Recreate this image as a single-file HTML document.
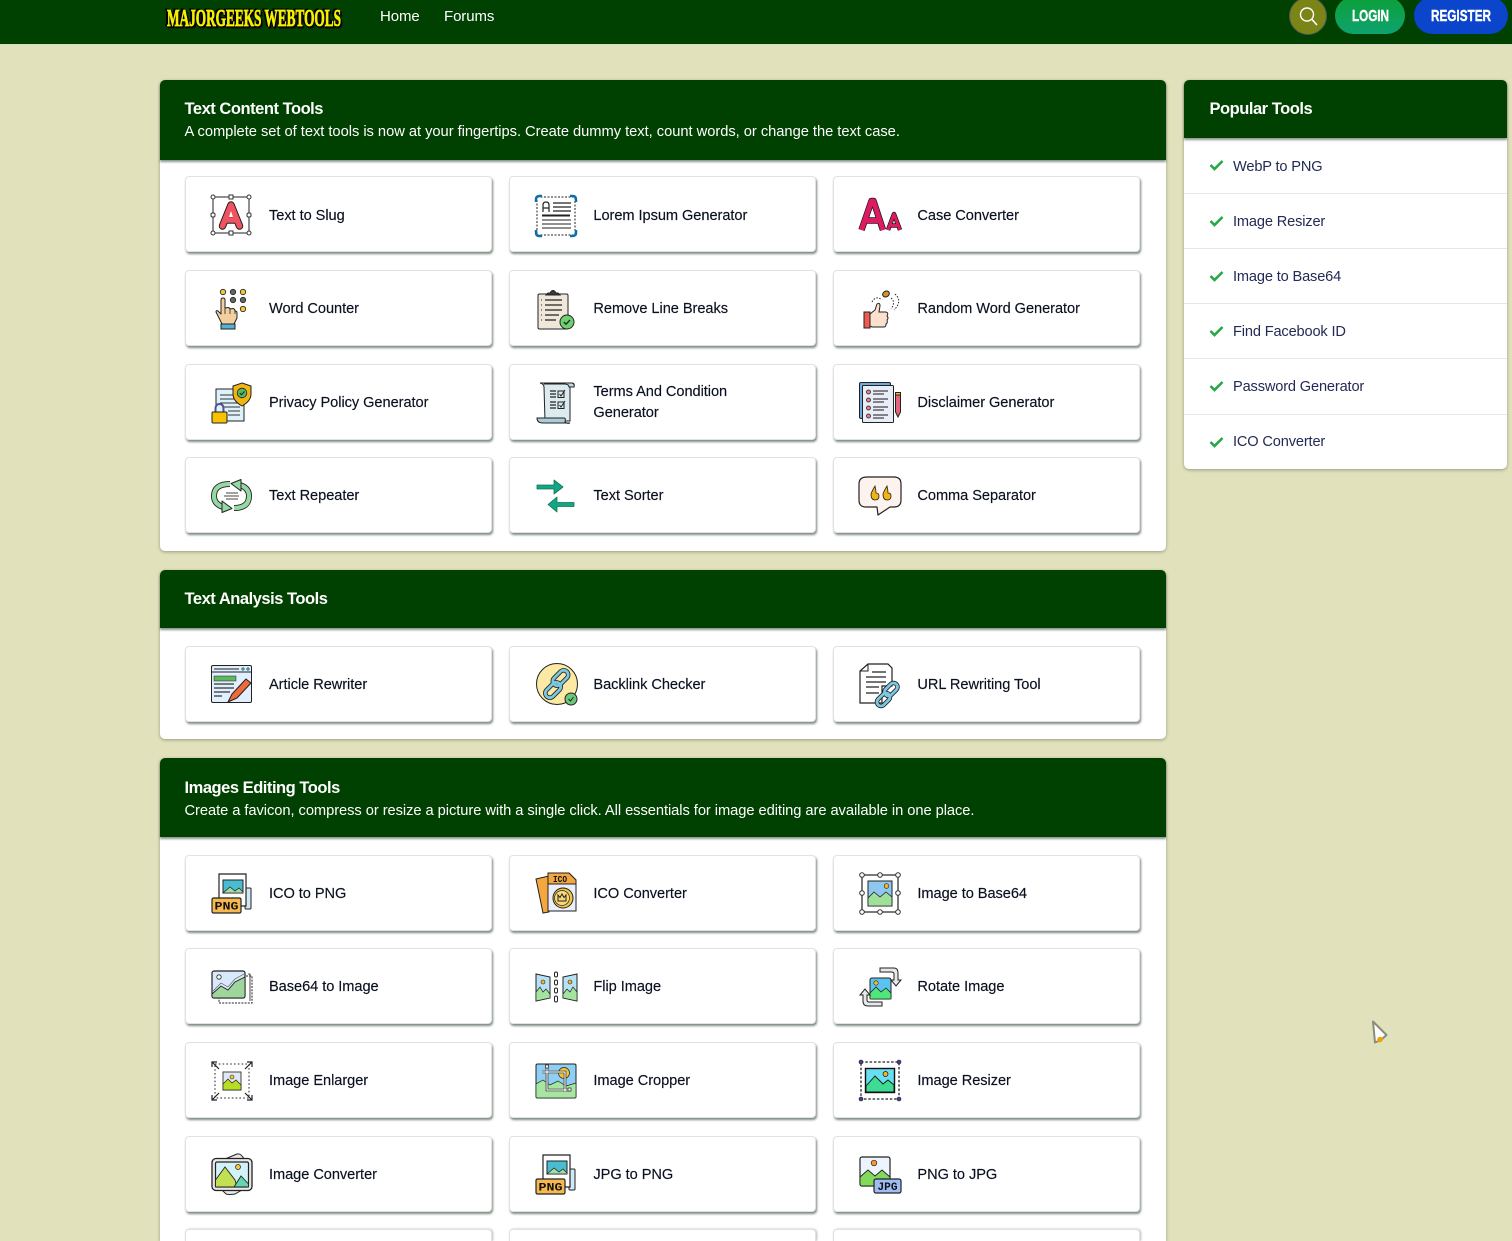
<!DOCTYPE html>
<html lang="en"><head><meta charset="utf-8"><title>MajorGeeks WebTools</title>
<style>
*{box-sizing:border-box}
html,body{margin:0;padding:0;width:1512px;height:1241px;overflow:hidden}
body{background:#e1e1bc;font-family:"Liberation Sans",sans-serif;color:#0b1020}
#w{position:relative;width:1512px;height:1241px;overflow:hidden;background:#e1e1bc}
a{color:inherit;text-decoration:none}
.nav{position:absolute;left:0;top:0;width:1512px;height:45px;background:#004000;border-bottom:1px solid #d5ddc8}
.nav a.l{position:absolute;top:8px;font-size:15px;line-height:18px;color:#fff;letter-spacing:-.1px}
.sec{position:absolute;left:160px;width:1006px;background:#fff;border-radius:5px;box-shadow:0 1px 3px rgba(60,70,50,.45)}
.hd{position:relative;background:#004000;border-radius:5px 5px 0 0;color:#fff;box-shadow:0 2px 2px rgba(70,90,80,.65)}
.hd h2{margin:0;font-size:16.5px;font-weight:bold;letter-spacing:-.47px;position:absolute;left:24.5px;line-height:22px}
.hd p{margin:0;font-size:14.7px;position:absolute;left:24.5px;line-height:20px;white-space:nowrap}
.c{position:absolute;width:307px;height:76px;background:#fff;border:1px solid #e2e2e2;border-radius:4px;box-shadow:1px 2px 2px rgba(70,90,75,.7)}
.c svg{position:absolute;left:24px;top:16px;width:44px;height:44px;overflow:visible}
.c span{position:absolute;left:83px;top:0;height:76px;display:flex;align-items:center;font-size:14.6px;line-height:21px;white-space:nowrap;letter-spacing:-.05px;-webkit-text-stroke:.15px #0b1020}
.c.r1 span{top:1px}
.c.e{height:12px;border-bottom:0;border-radius:4px 4px 0 0;box-shadow:1px 0 2px rgba(70,90,75,.4)}
.side{position:absolute;left:1184px;top:80px;width:323px;height:389px;background:#fff;border-radius:5px;box-shadow:0 1px 3px rgba(60,70,50,.45)}
.side .hd{height:58px}
.it{position:absolute;left:0;width:323px;height:55px;border-top:1px solid #e3e6ea;color:#222a55;font-size:14.6px;line-height:20px;letter-spacing:-.15px}
.it b{position:absolute;left:49px;top:18px;font-weight:normal;white-space:nowrap}
.it svg{position:absolute;left:25px;top:21px}
</style></head><body><div id="w">
<div class="nav">
<svg style="position:absolute;left:160px;top:2px;filter:drop-shadow(1px 1px 0 #000) drop-shadow(-1px -1px 0 #000) drop-shadow(1px 1px 0 #111) drop-shadow(-.5px .5px 0 #000)" width="190" height="34"><text x="7" y="24" textLength="174" lengthAdjust="spacingAndGlyphs" font-family="Liberation Serif" font-weight="bold" font-size="24" fill="#f4f000" stroke="#f4f000" stroke-width=".8">MAJORGEEKS WEBTOOLS</text></svg>
<a class="l" href="#" style="left:380px">Home</a><a class="l" href="#" style="left:444px">Forums</a>
<svg style="position:absolute;left:1289px;top:-3px" width="38" height="38"><circle cx="19" cy="19" r="18.5" fill="#7b8416" stroke="#4c5a50"/><circle cx="18" cy="17.500" r="6.500" fill="none" stroke="#fff" stroke-width="1.400"/><path d="M23 22.500L28 28" stroke="#fff" stroke-width="1.600"/></svg>
<svg style="position:absolute;left:1335px;top:-3px" width="70" height="37"><defs><linearGradient id="g1" x1="0" y1="0" x2="0" y2="1"><stop offset="0" stop-color="#0d9f38"/><stop offset="1" stop-color="#0ea36f"/></linearGradient></defs><rect width="70" height="37" rx="18.500" fill="url(#g1)"/><text x="17" y="24" textLength="37" lengthAdjust="spacingAndGlyphs" font-family="Liberation Sans" font-weight="bold" font-size="15.500" fill="#fff" stroke="#fff" stroke-width=".4">LOGIN</text></svg>
<svg style="position:absolute;left:1414px;top:-3px" width="94" height="37"><rect width="94" height="37" rx="18.500" fill="#0b45cc"/><text x="17" y="24" textLength="60" lengthAdjust="spacingAndGlyphs" font-family="Liberation Sans" font-weight="bold" font-size="15.500" fill="#fff" stroke="#fff" stroke-width=".4">REGISTER</text></svg>
</div>

<div class="sec" style="top:80px;height:471px"><div class="hd" style="height:80px"><h2 style="top:18px">Text Content Tools</h2><p style="top:42px;letter-spacing:-.027px">A complete set of text tools is now at your fingertips. Create dummy text, count words, or change the text case.</p></div></div>
<div class="sec" style="top:570px;height:169px"><div class="hd" style="height:58px"><h2 style="top:18px">Text Analysis Tools</h2></div></div>
<div class="sec" style="top:758px;height:483px;border-radius:5px 5px 0 0"><div class="hd" style="height:79px"><h2 style="top:19px">Images Editing Tools</h2><p style="top:43px;letter-spacing:-.06px">Create a favicon, compress or resize a picture with a single click. All essentials for image editing are available in one place.</p></div></div>

<div class="c r1" style="left:185px;top:176px"><svg viewBox="0 0 44 44"><rect x="3" y="4" width="36" height="36" fill="none" stroke="#222"/><path d="M12.500 33L21 12L29.500 33M15 27H27" fill="none" stroke="#222" stroke-width="7.500" stroke-linecap="round" stroke-linejoin="round"/><path d="M12.500 33L21 12L29.500 33M15 27H27" fill="none" stroke="#f0525f" stroke-width="5.500" stroke-linecap="round" stroke-linejoin="round"/><path d="M19 24L21 18L23 24Z" fill="#fff"/><g fill="#fff" stroke="#333"><circle cx="3" cy="4" r="2"/><rect x="19" y="2" width="4" height="4"/><circle cx="39" cy="4" r="2"/><rect x="1" y="20" width="4" height="4" rx="1.500"/><rect x="37" y="20" width="4" height="4" rx="1.500"/><circle cx="3" cy="40" r="2"/><rect x="19" y="38" width="4" height="4"/><circle cx="39" cy="40" r="2"/></g></svg><span>Text to Slug</span></div>

<div class="c r1" style="left:509.4px;top:176px"><svg viewBox="0 0 44 44"><rect x="3" y="4" width="38" height="38" fill="#fff" stroke="#222" stroke-dasharray="2 1.500"/><path d="M2 9V6Q2 3 6 3H8M36 3H39Q42 3 42 7V9M42 37V40Q42 43 38 43H36M8 43H5Q2 43 2 39V37" fill="none" stroke="#0d6fa8" stroke-width="2.500"/><path d="M9 19V12Q9 9 12 9T15 12V19M9 15H15M19 10H37M19 14H37M19 18H37" fill="none" stroke="#222" stroke-width="1.200"/><path d="M8 22.500H36" stroke="#222" stroke-width="2"/><path d="M8 27H37M8 31H37M8 35H37" stroke="#222" stroke-width="1.100"/></svg><span>Lorem Ipsum Generator</span></div>

<div class="c r1" style="left:833.4px;top:176px"><svg viewBox="0 0 44 44"><path d="M3.500 37L13.500 8H15.500L25 37M8 27.500H21" fill="none" stroke="#1a1a1a" stroke-width="6.500" stroke-linejoin="round"/><path d="M3.500 37L13.500 8H15.500L25 37M8 27.500H21" fill="none" stroke="#e01a62" stroke-width="5" stroke-linejoin="round"/><path d="M30 37L36 21L42 37M33 32.500H39" fill="none" stroke="#1a1a1a" stroke-width="4.500" stroke-linejoin="round"/><path d="M30 37L36 21L42 37M33 32.500H39" fill="none" stroke="#e01a62" stroke-width="3" stroke-linejoin="round"/></svg><span>Case Converter</span></div>

<div class="c" style="left:185px;top:270px"><svg viewBox="0 0 44 44"><g stroke="#222" stroke-width=".8"><circle cx="13" cy="5" r="2.700" fill="#f5c935"/><circle cx="23" cy="5" r="2.700" fill="#666"/><circle cx="33" cy="5" r="2.700" fill="#f5c935"/><circle cx="23" cy="13" r="2.700" fill="#666"/><circle cx="33" cy="13" r="2.700" fill="#666"/><circle cx="33" cy="22" r="2.700" fill="#f5c935"/></g><path d="M12 37L9 31L6 25Q6 23 8 24L11 27V13Q11 11 13 11T15 13V21L18 20.500Q20 21 20 22L23 21.500Q25 22 25 24Q27 24 27 26V31L24 37Z" fill="#f3cfa0" stroke="#222" stroke-linejoin="round"/><path d="M15 21V27M20 22V27M25 24V27" stroke="#222" stroke-width=".8"/><rect x="11" y="37" width="14" height="5" fill="#53b3d6" stroke="#222"/></svg><span>Word Counter</span></div>

<div class="c" style="left:509.4px;top:270px"><svg viewBox="0 0 44 44"><rect x="4" y="7" width="30" height="35" rx="1.500" fill="#f0e6da" stroke="#222"/><path d="M12 8L14 6H16Q19 1 22 6H24L26 8Z" fill="#3a3a3a" stroke="#222"/><path d="M11 13H28M11 18H28M11 23H28M11 28H25M11 33H22" stroke="#222" stroke-width="1.200"/><path d="M7 13H8M7 18H8M7 23H8M7 28H8M7 33H8" stroke="#222"/><circle cx="33" cy="35" r="7" fill="#6fd06f" stroke="#222"/><path d="M29.800 35L32 37.200L36 33" fill="none" stroke="#222" stroke-width="1.300"/></svg><span>Remove Line Breaks</span></div>

<div class="c" style="left:833.4px;top:270px"><svg viewBox="0 0 44 44"><rect x="6" y="25" width="6" height="16" fill="#ee5a52" stroke="#222"/><path d="M12 27L17 23L19 17Q22 15 22 19L21 25H28Q31 26 29 29Q31 31 29 33Q30 36 28 37Q28 40 26 40H14L12 39Z" fill="#fbe1cd" stroke="#222"/><ellipse cx="28" cy="7" rx="3.500" ry="2.800" fill="#d8912c" stroke="#222" transform="rotate(-30 28 7)"/><path d="M14 15Q18 8 24 13M37 7Q45 14 36 23M33 11Q38 15 33 22" fill="none" stroke="#222" stroke-dasharray="1.500 1.500"/></svg><span>Random Word Generator</span></div>

<div class="c" style="left:185px;top:364px"><svg viewBox="0 0 44 44"><path d="M6 8H30L34 12V40H6Z" fill="#dff1fa" stroke="#222"/><path d="M10 14H24M10 18H24M10 22H30M14 26H30M18 30H30M18 34H30" stroke="#333" stroke-width="1.100"/><path d="M32 2L41 5V13Q41 20 32 25Q23 20 23 13V5Z" fill="#f0b512" stroke="#222"/><circle cx="32" cy="12" r="4.800" fill="#58b958" stroke="#222" stroke-width=".8"/><path d="M29.800 12L31.500 13.800L34.500 10.500" fill="none" stroke="#123" stroke-width="1"/><path d="M5.500 32V28Q5.500 23 9.500 23T13.500 28V32" fill="none" stroke="#55508f" stroke-width="2"/><rect x="2" y="31" width="15" height="11" rx="1" fill="#f7c300" stroke="#222"/></svg><span>Privacy Policy Generator</span></div>

<div class="c" style="left:509.4px;top:364px"><svg viewBox="0 0 44 44"><path d="M6 2H38Q41 2 40 6H36V40H11L10 6Q10 3 6 2Z" fill="#dcebf0" stroke="#222"/><path d="M6 2H38Q41 3 40 6H35Q35 3 30 3H10" fill="#bcd9e4" stroke="#222"/><path d="M3 37H30Q32 37 31 41Q33 43 36 42H9Q3 42 3 37Z" fill="#a9ccd8" stroke="#222"/><path d="M16 10H22M16 13H22M16 16H22M16 21H22M16 24H22M16 27H22" stroke="#222" stroke-width="1.300"/><rect x="24" y="10" width="6" height="6.500" fill="none" stroke="#222"/><rect x="24" y="21" width="6" height="6.500" fill="none" stroke="#222"/><path d="M25.500 13L27 15L31 9M25.500 24L27 26L31 20" fill="none" stroke="#222"/></svg><span>Terms And Condition<br>Generator</span></div>

<div class="c" style="left:833.4px;top:364px"><svg viewBox="0 0 44 44"><rect x="1.500" y="1.500" width="31" height="36" rx="1.500" fill="#6fa8dc" stroke="#222"/><rect x="4.500" y="4.500" width="31" height="37" rx="1" fill="#e9edf8" stroke="#222"/><g fill="#ee7f86" stroke="#222" stroke-width=".8"><circle cx="10.500" cy="11" r="2"/><circle cx="10.500" cy="19" r="2"/><circle cx="10.500" cy="27" r="2"/><circle cx="10.500" cy="35" r="2"/></g><path d="M15 10H30M15 13H26M15 18H30M15 21H26M15 26H30M15 29H26M15 34H30M15 37H26" stroke="#444" stroke-width="1.200"/><path d="M37.500 14V31L40 36L42.500 31V14Z" fill="#e0657d" stroke="#222"/><path d="M37.500 11.500H42.500V14H37.500Z" fill="#f5bb3c" stroke="#222"/></svg><span>Disclaimer Generator</span></div>

<div class="c" style="left:185px;top:457px"><svg viewBox="0 0 44 44"><g fill="none" stroke-linecap="butt"><path d="M20 10Q4 10 4 22Q4 30 13 33" stroke="#222" stroke-width="6"/><path d="M24 34Q39 34 39 22Q39 14 30 11" stroke="#222" stroke-width="6"/><path d="M20 10Q4 10 4 22Q4 30 13 33" stroke="#94d8a4" stroke-width="4.200"/><path d="M24 34Q39 34 39 22Q39 14 30 11" stroke="#94d8a4" stroke-width="4.200"/></g><path d="M12 27L22 34.500L12 38.500Z" fill="#94d8a4" stroke="#222" stroke-linejoin="round"/><path d="M31 17L21 9.500L31 5.500Z" fill="#94d8a4" stroke="#222" stroke-linejoin="round"/><path d="M16 19H28M14 22H29M16 25H28" stroke="#444" stroke-width="1"/></svg><span>Text Repeater</span></div>

<div class="c" style="left:509.4px;top:457px"><svg viewBox="0 0 44 44"><path d="M3 11H20V6L29 13L20 20V15H3Z" fill="#12a58a" stroke="#174" stroke-width=".8" stroke-linejoin="round"/><path d="M40 28.500H23V23L14 30.500L23 38V32.500H40Z" fill="#12a58a" stroke="#174" stroke-width=".8" stroke-linejoin="round"/></svg><span>Text Sorter</span></div>

<div class="c" style="left:833.4px;top:457px"><svg viewBox="0 0 44 44"><path d="M9 3H36Q43 3 43 10V26Q43 33 36 33H32L20 41L19 33H8Q1 33 1 26V10Q1 3 9 3Z" fill="#fdf3ee" stroke="#222" stroke-width="1.200" stroke-linejoin="round"/><path d="M17 12Q14 17 13 20Q13 26 17 26Q21 26 21 22Q21 19 18 19Q18 16 17 12ZM29 12Q26 17 25 20Q25 26 29 26Q33 26 33 22Q33 19 30 19Q30 16 29 12Z" fill="#f1b514" stroke="#222" stroke-width=".8"/></svg><span>Comma Separator</span></div>

<div class="c" style="left:185px;top:646px"><svg viewBox="0 0 44 44"><rect x="1.500" y="2.500" width="40" height="37" rx="1.500" fill="#e1efff" stroke="#222"/><path d="M1.500 9H41.500" stroke="#222"/><path d="M4 6H29" stroke="#222"/><circle cx="33" cy="6" r="1.300" fill="#3cb9c9" stroke="#222" stroke-width=".5"/><circle cx="38" cy="6" r="1.300" fill="#3cb9c9" stroke="#222" stroke-width=".5"/><rect x="4" y="13" width="22" height="5" fill="#5db85d" stroke="#222" stroke-width=".5"/><path d="M4 21H24M4 25H24M4 29H20M4 33H12" stroke="#333" stroke-width="1.200"/><path d="M18 39L22 31L36 16L41 20L27 35Z" fill="#ee6a38" stroke="#222" stroke-linejoin="round"/></svg><span>Article Rewriter</span></div>

<div class="c" style="left:509.4px;top:646px"><svg viewBox="0 0 44 44"><circle cx="23" cy="21" r="20.500" fill="#fce9a3" stroke="#222"/><g fill="none" stroke="#222" stroke-width="4.500"><rect x="22" y="6" width="9" height="18" rx="4.500" transform="rotate(45 26.500 15)"/><rect x="14.500" y="18" width="9" height="18" rx="4.500" transform="rotate(45 19 27)"/></g><g fill="none" stroke="#7bc8e0" stroke-width="2.800"><rect x="22" y="6" width="9" height="18" rx="4.500" transform="rotate(45 26.500 15)"/><rect x="14.500" y="18" width="9" height="18" rx="4.500" transform="rotate(45 19 27)"/></g><circle cx="37" cy="36" r="6" fill="#6dc77b" stroke="#222"/><path d="M34.500 36L36.500 38L39.500 34" fill="none" stroke="#222"/></svg><span>Backlink Checker</span></div>

<div class="c" style="left:833.4px;top:646px"><svg viewBox="0 0 44 44"><path d="M10 1H30L34 5V23H24V40H2V8Z" fill="#fff" stroke="#222" stroke-width="1.200"/><path d="M10 1V8H2" fill="none" stroke="#222"/><path d="M14 9H28M8 14H28M8 19H28M8 24H21M8 30H21" stroke="#222" stroke-width="1.300"/><g fill="none" stroke="#222" stroke-width="4.500"><rect x="29" y="19" width="8" height="15" rx="4" transform="rotate(45 33 26.500)"/><rect x="21.500" y="29" width="8" height="15" rx="4" transform="rotate(45 25.500 36.500)"/></g><g fill="none" stroke="#7bc8e0" stroke-width="2.800"><rect x="29" y="19" width="8" height="15" rx="4" transform="rotate(45 33 26.500)"/><rect x="21.500" y="29" width="8" height="15" rx="4" transform="rotate(45 25.500 36.500)"/></g></svg><span>URL Rewriting Tool</span></div>

<div class="c" style="left:185px;top:855px"><svg viewBox="0 0 44 44"><rect x="35" y="16" width="6" height="21" rx="1" fill="#cfeaf4" stroke="#222"/><path d="M9 2H36V34H9Z" fill="#fff" stroke="#222" stroke-width="1.200"/><rect x="13" y="8" width="20" height="13" fill="#49bcd0" stroke="#222"/><path d="M13 21L20 15L25 19L29 16L33 20V21Z" fill="#a5dba5" stroke="#222" stroke-width=".7"/><rect x="2" y="26" width="29" height="15" rx="1.500" fill="#f7b84f" stroke="#222" stroke-width="1.200"/><text x="4.500" y="37.500" font-family="Liberation Mono" font-weight="bold" font-size="11" textLength="24" lengthAdjust="spacingAndGlyphs" fill="#111">PNG</text></svg><span>ICO to PNG</span></div>

<div class="c" style="left:509.4px;top:855px"><svg viewBox="0 0 44 44"><path d="M2 7L15 4V40L9 41Z" fill="#f4a63f" stroke="#222"/><path d="M14 1H35L42 8V39H14Z" fill="#eaf0fb" stroke="#222"/><path d="M14 1H35L42 8V12H14Z" fill="#f4a63f" stroke="#222"/><text x="19" y="10" font-family="Liberation Mono" font-weight="bold" font-size="9" textLength="14" lengthAdjust="spacingAndGlyphs" fill="#111">ICO</text><circle cx="29" cy="26" r="10" fill="#f5c54a" stroke="#222"/><circle cx="28" cy="26" r="7.500" fill="#f8d878" stroke="#222" stroke-width=".7"/><path d="M24 29V23L26 25.500L28 22L30 25.500L32 23V29Z" fill="none" stroke="#222"/></svg><span>ICO Converter</span></div>

<div class="c" style="left:833.4px;top:855px"><svg viewBox="0 0 44 44"><rect x="4" y="3" width="36" height="37" fill="none" stroke="#222" stroke-width="1.200"/><rect x="10" y="9" width="24" height="25" fill="#8ec8ee" stroke="#222"/><path d="M10 34V26L16 20L22 25L28 20L34 25V34Z" fill="#9fe09a" stroke="#222" stroke-width=".8"/><circle cx="28.500" cy="14" r="2.300" fill="#f9b02e" stroke="#222" stroke-width=".6"/><g fill="#fff" stroke="#333"><circle cx="4" cy="3" r="2.300"/><circle cx="22" cy="3" r="2.300"/><circle cx="40" cy="3" r="2.300"/><circle cx="4" cy="21" r="2.300"/><circle cx="40" cy="21" r="2.300"/><circle cx="4" cy="40" r="2.300"/><circle cx="22" cy="40" r="2.300"/><circle cx="40" cy="40" r="2.300"/></g></svg><span>Image to Base64</span></div>

<div class="c" style="left:185px;top:948px"><svg viewBox="0 0 44 44"><path d="M36 11H42V38H9V32" fill="none" stroke="#222" stroke-dasharray="2 1.200"/><path d="M38 9H40V36" fill="none" stroke="#222" stroke-width=".8"/><rect x="2" y="6" width="33" height="27" rx="2" fill="#d7e9fb" stroke="#222" stroke-width="1.200"/><path d="M2 29L11 21L18 25L25 17L35 12V31Q35 33 33 33H4Q2 33 2 31Z" fill="#9ed69c" stroke="#222" stroke-width=".9"/><path d="M3 26L11 18L18 22L25 14L34 9" fill="none" stroke="#555" stroke-width=".6"/><circle cx="9" cy="12" r="2.200" fill="#fff" stroke="#222" stroke-width=".8"/></svg><span>Base64 to Image</span></div>

<div class="c" style="left:509.4px;top:948px"><svg viewBox="0 0 44 44"><path d="M2 9L16 12V33L2 36Z" fill="#b7e1f5" stroke="#222"/><path d="M2 36V27L6 22L9 27L12 24L16 29V33Z" fill="#a5e3a0" stroke="#222" stroke-width=".7"/><circle cx="9" cy="17" r="2" fill="#f3b23a" stroke="#222" stroke-width=".6"/><path d="M43 9L29 12V33L43 36Z" fill="#b7e1f5" stroke="#222"/><path d="M43 36V27L39 22L36 27L33 24L29 29V33Z" fill="#a5e3a0" stroke="#222" stroke-width=".7"/><circle cx="36" cy="17" r="2" fill="#f3b23a" stroke="#222" stroke-width=".6"/><g fill="#fff" stroke="#222"><rect x="20.500" y="7" width="3" height="5" rx="1.500"/><rect x="20.500" y="15" width="3" height="5" rx="1.500"/><rect x="20.500" y="23" width="3" height="5" rx="1.500"/><rect x="20.500" y="31" width="3" height="6" rx="1.500"/></g></svg><span>Flip Image</span></div>

<div class="c" style="left:833.4px;top:948px"><svg viewBox="0 0 44 44"><rect x="12" y="13" width="21" height="21" rx="2" fill="#5cc3f0" stroke="#222"/><path d="M12 34V28L18 22L23 27L28 23L33 28V34Z" fill="#4fe878" stroke="#222" stroke-width=".8"/><circle cx="18" cy="18" r="2.200" fill="#f5bb30" stroke="#222" stroke-width=".6"/><path d="M22 3H36Q40 3 40 8V15H43L38 21L33 15H36V9Q36 7 33 7H22Z" fill="#e8e8e8" stroke="#222"/><path d="M24 41H10Q5 41 5 36V30H2L7 24L12 30H9V35Q9 37 11 37H24Z" fill="#e8e8e8" stroke="#222"/></svg><span>Rotate Image</span></div>

<div class="c" style="left:185px;top:1042px"><svg viewBox="0 0 44 44"><rect x="5" y="5" width="34" height="34" fill="none" stroke="#222" stroke-dasharray="1.600 2.200"/><rect x="13" y="13" width="18" height="18" fill="#dfe8f4" stroke="#444"/><path d="M13 31V25L18 20L22 24L26 21L31 26V31Z" fill="#b6de22" stroke="#222" stroke-width=".7"/><circle cx="22" cy="18" r="2" fill="#f7c83a" stroke="#222" stroke-width=".6"/><path d="M2 8V3H7M2 3L9 10M37 3H42V8M42 3L35 10M2 36V41H7M2 41L9 34M37 41H42V36M42 41L35 34" fill="none" stroke="#222" stroke-width="1.200"/></svg><span>Image Enlarger</span></div>

<div class="c" style="left:509.4px;top:1042px"><svg viewBox="0 0 44 44"><rect x="2" y="5" width="40" height="34" rx="1.500" fill="#90cff4" stroke="#222"/><path d="M2 38V25L9 21L16 26L24 22L32 27L42 24V38Q42 39 40 39H4Q2 39 2 38Z" fill="#a6e6a0" stroke="#222" stroke-width=".7"/><circle cx="30" cy="14" r="5.500" fill="#f5c534" stroke="#222" stroke-width=".7"/><path d="M8 13H31V33M13 8V31H36" fill="none" stroke="#222" stroke-width="2.600"/><path d="M8 13H31V33M13 8V31H36" fill="none" stroke="#fff" stroke-width="1.200"/><rect x="11.500" y="6" width="3" height="3" fill="#fff" stroke="#222" stroke-width=".7"/><rect x="34" y="29" width="3" height="3" fill="#fff" stroke="#222" stroke-width=".7"/></svg><span>Image Cropper</span></div>

<div class="c" style="left:833.4px;top:1042px"><svg viewBox="0 0 44 44"><rect x="3" y="3" width="38" height="37" fill="none" stroke="#222" stroke-width="1.300" stroke-dasharray="2.500 1.800"/><g fill="#42428a" stroke="#222" stroke-width=".6"><circle cx="3" cy="3" r="2"/><circle cx="41" cy="3" r="2"/><circle cx="3" cy="40" r="2"/><circle cx="41" cy="40" r="2"/></g><rect x="7.500" y="9.500" width="29" height="24" fill="#66dff3" stroke="#111" stroke-width="1.400"/><path d="M8 33V27L17 17L25 25L30 21L36 26V33Z" fill="#3edb92" stroke="#111" stroke-width=".9"/><circle cx="27.500" cy="15" r="2.500" fill="#f7b521" stroke="#111" stroke-width=".7"/></svg><span>Image Resizer</span></div>

<div class="c" style="left:185px;top:1136px"><svg viewBox="0 0 44 44"><path d="M15 6L27 1Q31 0 34 6M12 37L16 41Q19 42 25 41L32 37" fill="#e8e8e8" stroke="#222"/><rect x="2" y="5.500" width="40" height="32" rx="4" fill="#e8e8e8" stroke="#222" stroke-width="1.300"/><rect x="5.500" y="9" width="33" height="25" rx="1.500" fill="#d0f2f8" stroke="#222" stroke-width="1.200"/><path d="M5.500 34V27L15 14L25 27L27 34Z" fill="#c2e052" stroke="#222" stroke-width=".9"/><path d="M24 34L31 23L38.500 31V34Z" fill="#66d4ae" stroke="#222" stroke-width=".9"/><circle cx="28" cy="14" r="2.500" fill="#f7c83a" stroke="#222" stroke-width=".7"/></svg><span>Image Converter</span></div>

<div class="c" style="left:509.4px;top:1136px"><svg viewBox="0 0 44 44"><rect x="35" y="16" width="6" height="21" rx="1" fill="#cfeaf4" stroke="#222"/><path d="M9 2H36V34H9Z" fill="#fff" stroke="#222" stroke-width="1.200"/><rect x="13" y="8" width="20" height="13" fill="#49bcd0" stroke="#222"/><path d="M13 21L20 15L25 19L29 16L33 20V21Z" fill="#a5dba5" stroke="#222" stroke-width=".7"/><rect x="2" y="26" width="29" height="15" rx="1.500" fill="#f7b84f" stroke="#222" stroke-width="1.200"/><text x="4.500" y="37.500" font-family="Liberation Mono" font-weight="bold" font-size="11" textLength="24" lengthAdjust="spacingAndGlyphs" fill="#111">PNG</text></svg><span>JPG to PNG</span></div>

<div class="c" style="left:833.4px;top:1136px"><svg viewBox="0 0 44 44"><rect x="2" y="4" width="30" height="29" rx="2" fill="#eef4fd" stroke="#222" stroke-width="1.200"/><path d="M2 31V24L10 17L17 23L24 17L32 24V31Q32 33 30 33H4Q2 33 2 31Z" fill="#82d95c" stroke="#222" stroke-width=".9"/><circle cx="16" cy="10" r="2.800" fill="#f79b2e" stroke="#222" stroke-width=".7"/><rect x="16" y="26" width="27" height="14" rx="2" fill="#9fbdf5" stroke="#222" stroke-width="1.200"/><text x="19.500" y="37" font-family="Liberation Mono" font-weight="bold" font-size="11" textLength="20" lengthAdjust="spacingAndGlyphs" fill="#111">JPG</text></svg><span>PNG to JPG</span></div>

<div class="c e" style="left:185px;top:1229px"></div>
<div class="c e" style="left:509.4px;top:1229px"></div>
<div class="c e" style="left:833.4px;top:1229px"></div>

<div class="side"><div class="hd"><h2 style="left:25.500px;top:18px">Popular Tools</h2></div>
<div class="it" style="top:58px;border-top:0"><svg width="15" height="12" viewBox="0 0 15 12"><path d="M1.500 6L5.500 10L13.500 2" fill="none" stroke="#28a745" stroke-width="2.600"/></svg><b style="top:19px">WebP to PNG</b></div>
<div class="it" style="top:113px"><svg width="15" height="12" viewBox="0 0 15 12"><path d="M1.500 6L5.500 10L13.500 2" fill="none" stroke="#28a745" stroke-width="2.600"/></svg><b>Image Resizer</b></div>
<div class="it" style="top:168px"><svg width="15" height="12" viewBox="0 0 15 12"><path d="M1.500 6L5.500 10L13.500 2" fill="none" stroke="#28a745" stroke-width="2.600"/></svg><b>Image to Base64</b></div>
<div class="it" style="top:223px"><svg width="15" height="12" viewBox="0 0 15 12"><path d="M1.500 6L5.500 10L13.500 2" fill="none" stroke="#28a745" stroke-width="2.600"/></svg><b>Find Facebook ID</b></div>
<div class="it" style="top:278px"><svg width="15" height="12" viewBox="0 0 15 12"><path d="M1.500 6L5.500 10L13.500 2" fill="none" stroke="#28a745" stroke-width="2.600"/></svg><b>Password Generator</b></div>
<div class="it" style="top:334px"><svg width="15" height="12" viewBox="0 0 15 12"><path d="M1.500 6L5.500 10L13.500 2" fill="none" stroke="#28a745" stroke-width="2.600"/></svg><b style="top:17px">ICO Converter</b></div>
</div>

<svg style="position:absolute;left:1368px;top:1017px" width="24" height="30"><path d="M5 4.500L18.500 18L13 23L7 25.500Z" fill="#fff" stroke="#8b8b7c" stroke-width="2" stroke-linejoin="round"/><circle cx="12" cy="22.500" r="2.800" fill="#f0a400"/></svg>
</div></body></html>
